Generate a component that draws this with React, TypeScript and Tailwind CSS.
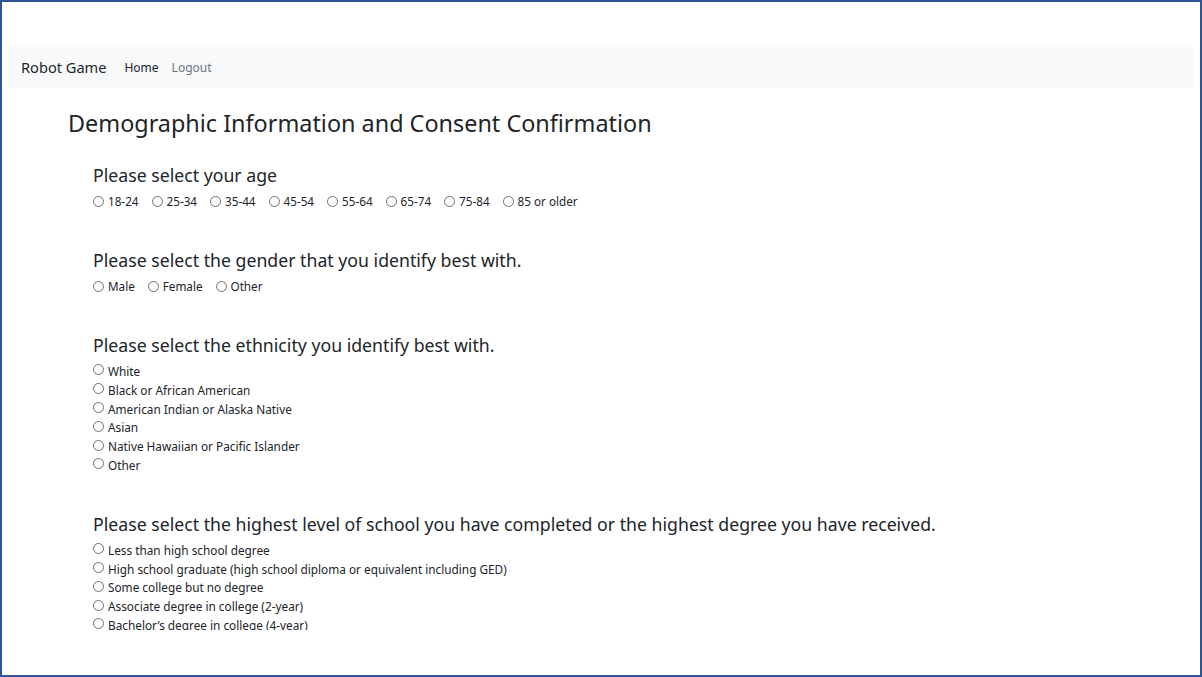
import React from 'react'

type Group = {
  title: string
  name: string
  options: string[]
  inline?: boolean
}

const groups: Group[] = [
  {
    title: 'Please select your age',
    name: 'age',
    inline: true,
    options: ['18-24', '25-34', '35-44', '45-54', '55-64', '65-74', '75-84', '85 or older'],
  },
  {
    title: 'Please select the gender that you identify best with.',
    name: 'gender',
    inline: true,
    options: ['Male', 'Female', 'Other'],
  },
  {
    title: 'Please select the ethnicity you identify best with.',
    name: 'ethnicity',
    options: [
      'White',
      'Black or African American',
      'American Indian or Alaska Native',
      'Asian',
      'Native Hawaiian or Pacific Islander',
      'Other',
    ],
  },
  {
    title:
      'Please select the highest level of school you have completed or the highest degree you have received.',
    name: 'education',
    options: [
      'Less than high school degree',
      'High school graduate (high school diploma or equivalent including GED)',
      'Some college but no degree',
      'Associate degree in college (2-year)',
      'Bachelor\u2019s degree in college (4-year)',
    ],
  },
]

function Radio() {
  return (
    <span className="inline-block h-[11px] w-[11px] shrink-0 rounded-full border border-[#6f6f6f] bg-white" />
  )
}

function RadioGroup({ group }: { group: Group }) {
  return (
    <section className="mb-[36px]">
      <h2 className="text-[17.7px] leading-[26px] text-[#212529]">{group.title}</h2>
      {group.inline ? (
        <div className="mt-[4px] flex gap-[13px] text-[11.7px] leading-[19px] text-[#212529]">
          {group.options.map((o) => (
            <label key={o} className="flex items-center gap-[4px]">
              <Radio />
              <span>{o}</span>
            </label>
          ))}
        </div>
      ) : (
        <div className="mt-[4px] flex flex-col text-[11.8px] leading-[18.8px] text-[#212529]">
          {group.options.map((o) => (
            <label key={o} className="flex items-center gap-[4px]">
              <span className="-mt-[3px] flex">
                <Radio />
              </span>
              <span>{o}</span>
            </label>
          ))}
        </div>
      )}
    </section>
  )
}

export default function App() {
  return (
    <div
      className="h-[677px] w-[1202px] overflow-hidden border-2 border-[#2f5597] bg-white"
      style={{ fontFamily: '"Noto Sans", "Open Sans", sans-serif' }}
    >
      <div className="h-[628px] overflow-hidden px-[6px] pt-[45px]">
        <nav className="flex h-[41px] items-center bg-[#f8f9fa] px-[13px]">
          <span className="mr-[18px] text-[14.6px] text-[#212529]">Robot Game</span>
          <a className="mr-[13px] text-[12px] text-[#212529]">Home</a>
          <a className="text-[12px] text-[#6c757d]">Logout</a>
        </nav>
        <main className="px-[60px] pt-[20px]">
          <h1 className="mb-[24px] text-[23.4px] leading-[30px] text-[#212529]">
            Demographic Information and Consent Confirmation
          </h1>
          <div className="pl-[25px]">
            {groups.map((g) => (
              <RadioGroup key={g.name} group={g} />
            ))}
          </div>
        </main>
      </div>
    </div>
  )
}
